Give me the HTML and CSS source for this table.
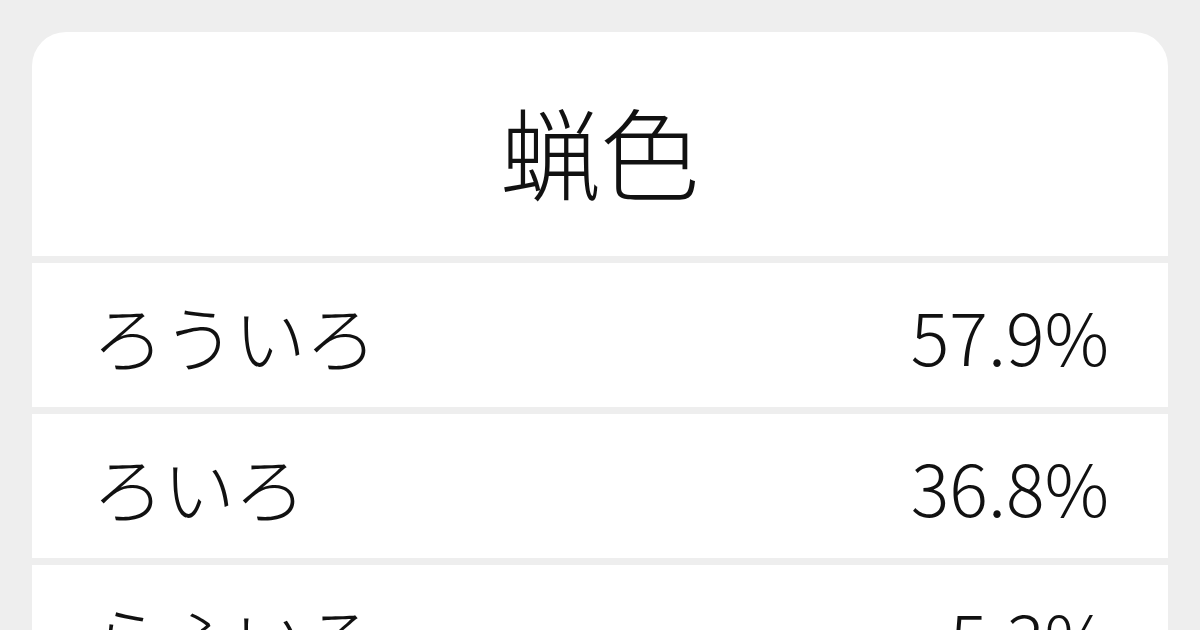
FILE: index.html
```html
<!DOCTYPE html>
<html lang="ja">
<head>
<meta charset="utf-8">
<title>蝋色</title>
<link rel="stylesheet" href="styles.css">
</head>
<body>
<main class="card">
  <h1 class="title">蝋色</h1>
  <div class="row"><span class="reading">ろういろ</span><span class="pct">57.9%</span></div>
  <div class="row"><span class="reading">ろいろ</span><span class="pct">36.8%</span></div>
  <div class="row"><span class="reading">らふいろ</span><span class="pct">5.3%</span></div>
</main>
</body>
</html>
```

FILE: styles.css
```css
html, body {
  margin: 0;
  padding: 0;
  background: #eeeeee;
  width: 1200px;
  height: 630px;
  overflow: hidden;
}

body {
  padding: 32px 32px 0;
  box-sizing: border-box;
  font-family: "Noto Sans CJK JP", "Noto Sans", sans-serif;
  color: #111;
}

.card {
  display: flex;
  flex-direction: column;
  gap: 7px;
  background: #eeeeee;
  border-radius: 34px 34px 0 0;
  overflow: hidden;
}

.title {
  margin: 0;
  height: 224px;
  display: flex;
  align-items: center;
  justify-content: center;
  padding-top: 12px;
  box-sizing: border-box;
  background: #fff;
  font-size: 100px;
  font-weight: 300;
  line-height: 1;
}

.row {
  height: 144px;
  flex: none;
  background: #fff;
  display: flex;
  align-items: center;
  justify-content: space-between;
  padding: 0 59px 0 60px;
  font-size: 72px;
  font-weight: 300;
  line-height: 1;
}

.reading {
  letter-spacing: -1px;
}
```
